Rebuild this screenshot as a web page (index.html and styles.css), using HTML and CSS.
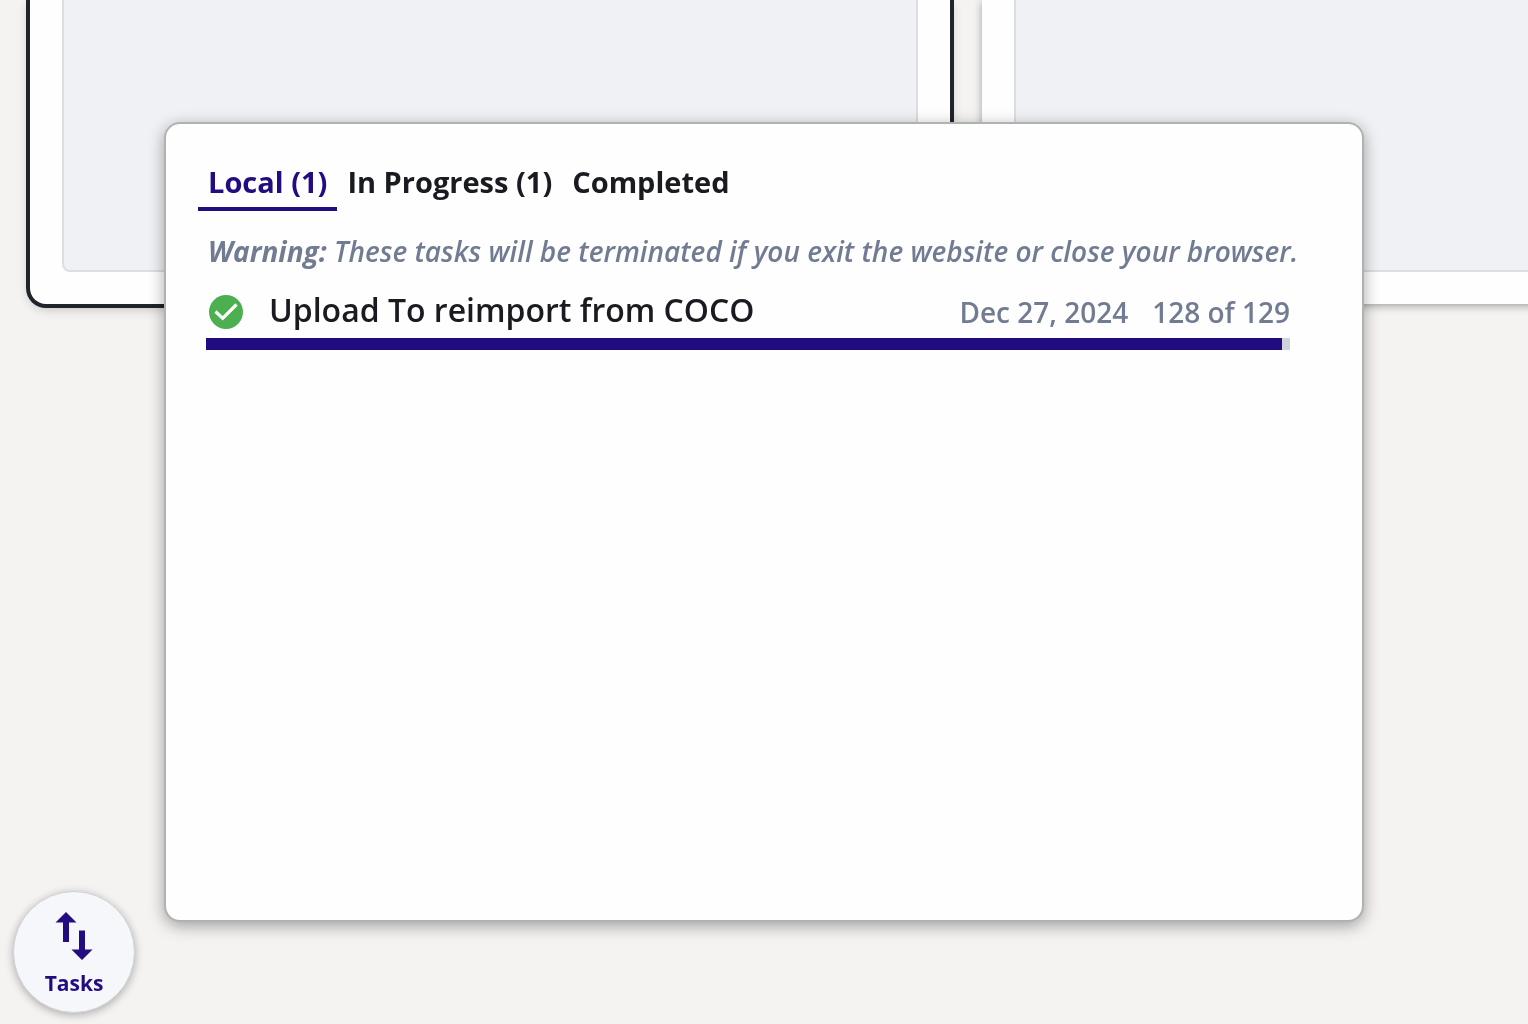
FILE: index.html
```html
<!DOCTYPE html>
<html lang="en">
<head>
<meta charset="utf-8">
<title>Tasks</title>
<link rel="stylesheet" href="styles.css">
</head>
<body>
<main class="gallery">
  <article class="card card-selected"><div class="card-preview"></div></article>
  <article class="card"><div class="card-preview"></div></article>
</main>

<section class="task-panel" aria-label="Tasks">
  <div class="tabs" role="tablist">
    <button class="tab tab-active" type="button" role="tab" aria-selected="true">Local (1)</button>
    <button class="tab" type="button" role="tab" aria-selected="false">In Progress (1)</button>
    <button class="tab" type="button" role="tab" aria-selected="false">Completed</button>
  </div>
  <p class="warning"><strong>Warning:</strong> These tasks will be terminated if you exit the website or close your browser.</p>
  <div class="task">
    <div class="task-row">
      <svg class="task-icon" viewBox="0 0 34 34" aria-hidden="true">
        <circle cx="17" cy="17" r="17" fill="#4caf50"/>
        <path d="M6.500 16.500 13.700 23.300 27.500 9.500" fill="none" stroke="#fff" stroke-width="3.200"/>
      </svg>
      <span class="task-name">Upload To reimport from COCO</span>
      <span class="task-meta">Dec 27, 2024</span>
      <span class="task-meta">128 of 129</span>
    </div>
    <div class="progress" role="progressbar" aria-label="Upload progress" aria-valuemin="0" aria-valuemax="129" aria-valuenow="128">
      <div class="progress-fill" style="width: 99.22%"></div>
    </div>
  </div>
</section>

<button class="tasks-button" type="button">
  <svg class="tasks-icon" viewBox="0 0 38 48" aria-hidden="true">
    <path fill="#230c80" d="M11 0 21.500 10.500H14V30H8V10.500H0.500ZM24 18.500h6V37.500h7.500L27 48 16.500 37.500H24Z"/>
  </svg>
  <span>Tasks</span>
</button>
</body>
</html>
```
FILE: styles.css
```css
* {
  box-sizing: border-box;
}

body {
  margin: 0;
  min-height: 100vh;
  background: #f4f3f1;
  color: #1a1b20;
  font-family: "Open Sans", "Noto Sans", sans-serif;
}

.gallery {
  display: flex;
  gap: 32px;
  padding: 0 0 32px 30px;
  overflow: hidden;
}

.card {
  flex: 0 0 920px;
  padding: 0 32px 32px;
  border-radius: 0 0 16px 16px;
  background: #fefefe;
  box-shadow: 0 2px 8px rgba(0, 0, 0, 0.35);
}

.card-selected {
  box-shadow: 0 0 0 4px #20242b, 0 4px 12px rgba(0, 0, 0, 0.25);
}

.card-preview {
  min-height: 272px;
  border: 2px solid #dddee0;
  border-top: 0;
  border-radius: 0 0 8px 8px;
  background: #f0f1f4;
}

.task-panel {
  position: fixed;
  left: 164px;
  right: 164px;
  bottom: 102px;
  min-height: 800px;
  padding: 32px;
  border: 2px solid #b0b1b1;
  border-radius: 16px;
  background: #fefefe;
  box-shadow: 0 4px 16px rgba(0, 0, 0, 0.35);
}

.tabs {
  display: flex;
}

.tab {
  padding: 6px 10px 5px;
  border: 0;
  border-bottom: 4px solid transparent;
  background: none;
  color: inherit;
  font: 700 29px/40px "Open Sans", "Noto Sans", sans-serif;
}

.tab-active {
  border-color: #230c80;
  color: #230c80;
}

.warning {
  margin: 20px 0 19px;
  padding-left: 10px;
  color: #717b92;
  font-size: 28px;
  font-style: italic;
  font-weight: 600;
  line-height: 40px;
  white-space: nowrap;
}

.warning strong {
  font-weight: 700;
}

.task {
  padding: 0 40px 0 8px;
}

.task-row {
  display: flex;
  align-items: center;
  gap: 24px;
  padding-left: 3px;
  margin-bottom: 4px;
}

.task-icon {
  width: 34px;
  height: 34px;
}

.task-name {
  flex: 1;
  padding: 0 0 4px 2px;
  font-size: 32px;
  font-weight: 600;
  line-height: 40px;
}

.task-meta {
  color: #717b92;
  font-size: 28px;
  font-weight: 600;
}

.progress {
  height: 12px;
  background: #cfd4dc;
}

.progress-fill {
  height: 100%;
  background: #230c80;
}

.tasks-button {
  position: fixed;
  left: 13px;
  bottom: 11px;
  display: flex;
  flex-direction: column;
  align-items: center;
  gap: 9px;
  width: 122px;
  height: 122px;
  padding: 20px 0 0;
  border: 1px solid #d0d1d3;
  border-radius: 50%;
  background: #f6f7fa;
  box-shadow: 0 2px 8px rgba(0, 0, 0, 0.3);
  color: #230c80;
  font: 700 21px/28px "Open Sans", "Noto Sans", sans-serif;
}

.tasks-icon {
  width: 38px;
  height: 48px;
}
```
